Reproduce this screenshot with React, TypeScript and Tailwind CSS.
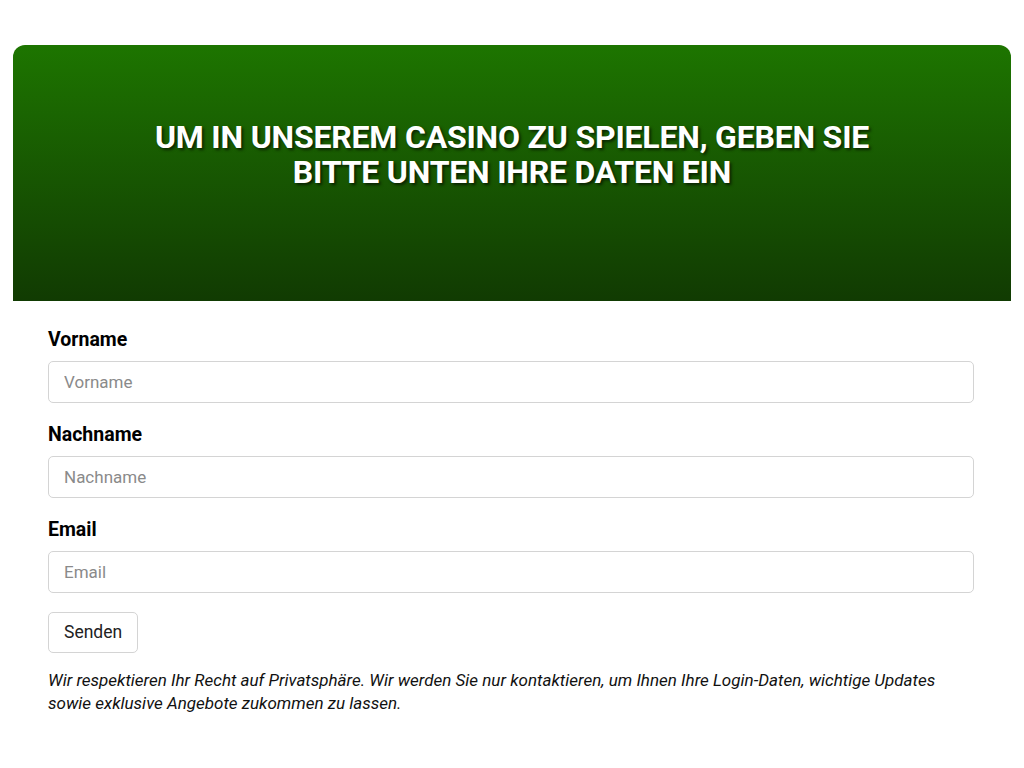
import React, { useState } from 'react';

const fields = [
  { name: 'vorname', label: 'Vorname', type: 'text' },
  { name: 'nachname', label: 'Nachname', type: 'text' },
  { name: 'email', label: 'Email', type: 'email' },
];

const App: React.FC = () => {
  const [values, setValues] = useState<Record<string, string>>({});

  return (
    <div className="min-h-screen bg-white pt-[45px] px-[13px] font-['Roboto',sans-serif]">
      {/* Header */}
      <div className="h-[256px] rounded-t-[12px] bg-gradient-to-b from-[#1d7500] to-[#113b02] flex justify-center pt-[75px]">
        <h1 className="text-white font-bold text-[32px] leading-[35px] tracking-[-0.2px] text-center uppercase max-w-[760px] [text-shadow:2px_2px_3px_rgba(0,0,0,0.6)]">
          Um in unserem Casino zu spielen, geben Sie bitte unten Ihre Daten ein
        </h1>
      </div>

      {/* Form */}
      <form className="px-[35px] pt-[27px]" onSubmit={(e) => e.preventDefault()}>
        {fields.map((f, i) => (
          <div key={f.name} className={i === fields.length - 1 ? 'mb-[19px]' : 'mb-[20px]'}>
            <label htmlFor={f.name} className="block text-[19.5px] leading-[24px] font-bold text-black mb-[9px]">
              {f.label}
            </label>
            <input
              id={f.name}
              type={f.type}
              placeholder={f.label}
              value={values[f.name] || ''}
              onChange={(e) => setValues({ ...values, [f.name]: e.target.value })}
              className="block w-[926px] h-[42px] border border-[#d4d4d4] rounded-[5px] px-[15px] text-[17px] text-[#333] placeholder:text-[#8a8a8a] outline-none"
            />
          </div>
        ))}
        <button
          type="submit"
          className="h-[41px] px-[15px] border border-[#d4d4d4] rounded-[5px] text-[17.5px] text-[#222] bg-white"
        >
          Senden
        </button>
        <p className="italic text-[17px] leading-[23px] text-[#111] mt-[16px] max-w-[926px]">
          Wir respektieren Ihr Recht auf Privatsphäre. Wir werden Sie nur kontaktieren, um Ihnen Ihre Login-Daten, wichtige Updates sowie exklusive Angebote zukommen zu lassen.
        </p>
      </form>
    </div>
  );
};

export default App;
